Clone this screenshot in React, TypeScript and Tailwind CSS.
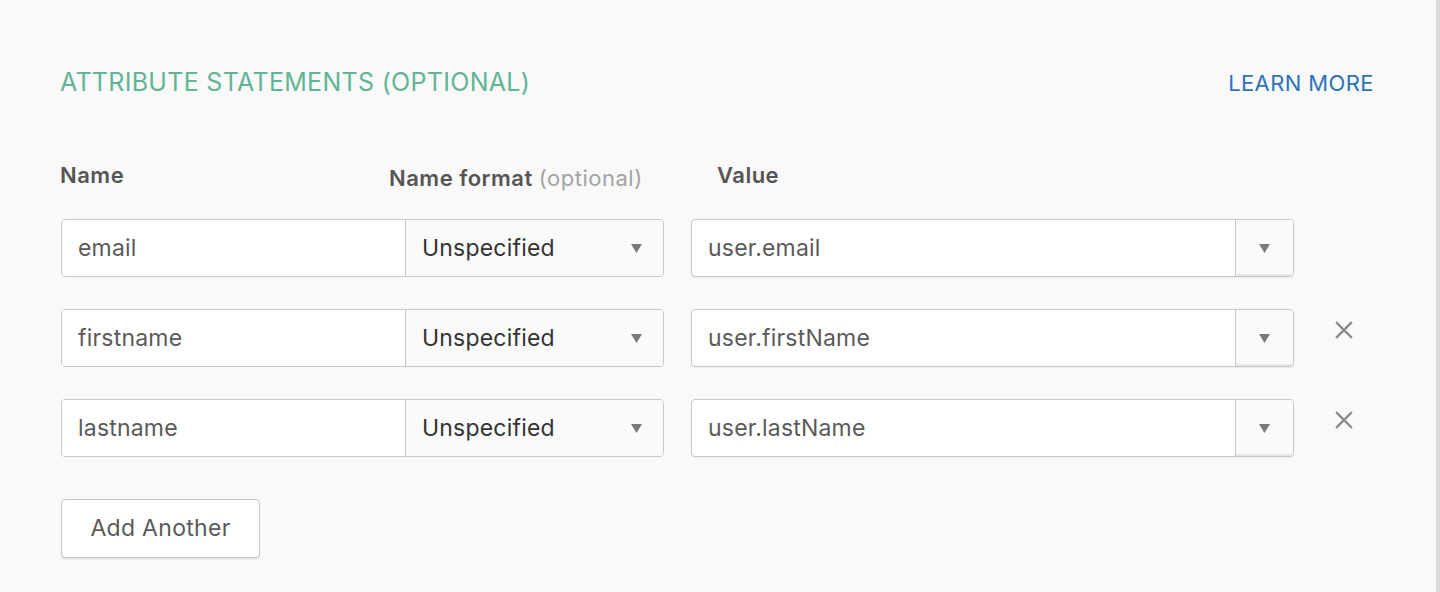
const rows = [
  { name: "email", value: "user.email", removable: false },
  { name: "firstname", value: "user.firstName", removable: true },
  { name: "lastname", value: "user.lastName", removable: true },
];

const Caret = () => (
  <svg width="11" height="9" viewBox="0 0 11 9" className="fill-[#7a7a7a]">
    <path d="M0 0h11L5.5 9z" />
  </svg>
);

const AttributeRow = ({ name, value, removable }: { name: string; value: string; removable: boolean }) => (
  <div className="flex items-center h-[58px] text-[23px] tracking-[0.2px]">
    <div className="flex w-[603px] h-full rounded-[4px] border border-[#c8c8c8] bg-white overflow-hidden">
      <div className="w-[343px] flex items-center px-4 text-[#5a5a5a] bg-white">{name}</div>
      <div className="flex-1 flex items-center justify-between pl-4 pr-[21px] border-l border-[#c8c8c8] bg-[#fafafa] text-[#333]">
        <span>Unspecified</span>
        <Caret />
      </div>
    </div>
    <div className="ml-[27px] flex w-[603px] h-full rounded-[4px] border border-[#c8c8c8] bg-white overflow-hidden shadow-[0_1px_1px_rgba(0,0,0,0.06)]">
      <div className="flex-1 flex items-center px-4 text-[#5a5a5a]">{value}</div>
      <div className="w-[58px] flex items-center justify-center border-l border-[#c8c8c8] bg-[#fafafa] shadow-[inset_0_-2px_0_rgba(0,0,0,0.08)]">
        <Caret />
      </div>
    </div>
    {removable && (
      <button className="ml-[41px] -mt-[16px] text-[#8a8a8a]">
        <svg width="18" height="18" viewBox="0 0 18 18" stroke="currentColor" strokeWidth="2.4" strokeLinecap="square">
          <path d="M2 2l14 14M16 2L2 16" />
        </svg>
      </button>
    )}
  </div>
);

export default function App() {
  return (
    <div className="w-[1440px] h-[592px] bg-[#f9f9f9] border-r-[4px] border-[#dcdcdc] font-['Inter',sans-serif] overflow-hidden">
      <div className="pl-[60px] pr-[62px] pt-[65px]">
        <div className="flex items-center justify-between h-[36px]">
          <h2 className="text-[25px] tracking-[0.3px] text-[#5fb594] font-normal">ATTRIBUTE STATEMENTS (OPTIONAL)</h2>
          <a className="text-[22px] tracking-[0.4px] text-[#2e72b8]">LEARN MORE</a>
        </div>
        <div className="flex items-start mt-[58px] h-[31px] text-[22px] tracking-[0.5px] text-[#555] font-semibold">
          <span className="w-[329px]">Name</span>
          <span className="w-[328px] translate-y-[3px]">
            Name format <span className="font-normal text-[#a3a3a3]">(optional)</span>
          </span>
          <span>Value</span>
        </div>
        <div className="mt-[29px] flex flex-col gap-[32px] pl-px">
          {rows.map((r) => (
            <AttributeRow key={r.name} {...r} />
          ))}
        </div>
        <button className="mt-[42px] ml-px w-[199px] h-[59px] rounded-[4px] border border-[#c4c4c4] bg-white text-[23px] tracking-[0.3px] text-[#5a5a5a] shadow-[0_2px_0_rgba(0,0,0,0.07)]">
          Add Another
        </button>
      </div>
    </div>
  );
}
